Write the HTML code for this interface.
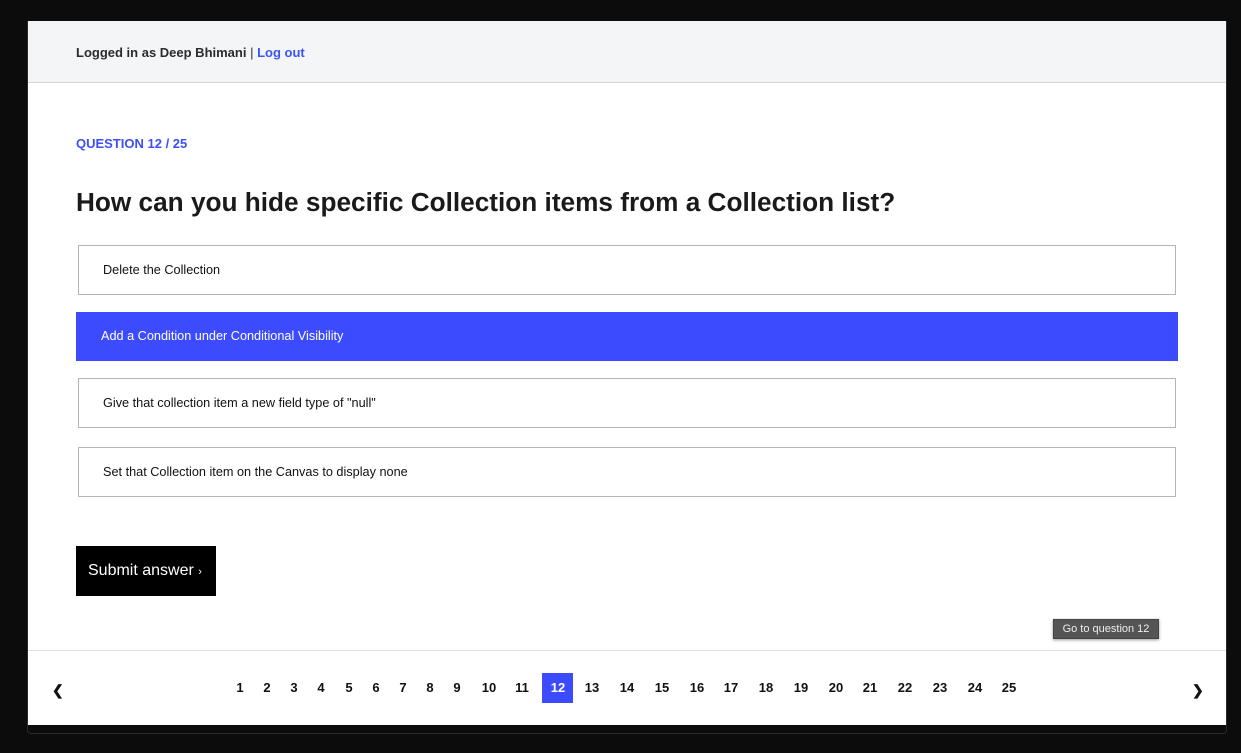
<!DOCTYPE html>
<html><head><meta charset="utf-8"><style>
*{margin:0;padding:0;box-sizing:border-box}
body{width:1241px;height:753px;background:#0c0c0c;font-family:"Liberation Sans",Arial,sans-serif;position:relative;overflow:hidden}
.panel{position:absolute;left:28px;top:21px;width:1198px;height:704px;background:#fff;overflow:hidden}
.outline{position:absolute;left:27px;top:21px;width:1200px;height:713px;border:1px solid #2a2a2a;border-top:none;border-radius:0 0 4px 4px}
.hdr{position:absolute;left:0;top:0;width:100%;height:62px;background:#f4f5f7;border-bottom:1px solid #d6d6d6}
.hdr .t{position:absolute;left:48px;top:24px;font-size:13px;font-weight:bold;color:#2b2b2b}
.hdr a{color:#3a55f5;text-decoration:none}
.q{position:absolute;left:48px;top:115px;font-size:13px;font-weight:bold;color:#3d4ef8}
h1{position:absolute;left:48px;top:166px;font-size:26.2px;font-weight:bold;color:#1a1a1a}
.opt{position:absolute;left:50px;width:1098px;height:50px;border:1px solid #b5b5b5;font-size:12.7px;color:#111;padding-left:24px;line-height:48px}
.sel{left:48px;width:1102px;height:49px;background:#3c4bfe;color:#fff;border:none;padding-left:25px;line-height:49px}
.btn{position:absolute;left:48px;top:525px;width:140px;height:50px;background:#000;color:#fff;font-size:16px;line-height:50px;padding-left:12px}
.tip{position:absolute;left:1025px;top:598px;width:106px;height:20px;background:#555;border:1px solid #444;color:#eee;font-size:11px;line-height:18px;text-align:center;box-shadow:0 1px 3px rgba(0,0,0,.4)}
.ft{position:absolute;left:0;top:629px;width:100%;border-top:1px solid #dbe2e6}
.n{position:absolute;top:659px;font-size:13px;font-weight:bold;color:#111;transform:translateX(-50%)}
.cur{position:absolute;left:514px;top:652px;width:31px;height:30px;background:#3c4bfe}
.arr{position:absolute;top:661px;font-size:14px;font-weight:bold;color:#111}
</style></head><body>
<div class="outline"></div>
<div class="panel">
<div class="hdr"><div class="t">Logged in as Deep Bhimani <span style="font-weight:normal;color:#333">|</span> <a>Log out</a></div></div>
<div class="q">QUESTION 12 / 25</div>
<h1>How can you hide specific Collection items from a Collection list?</h1>
<div class="opt" style="top:224px">Delete the Collection</div>
<div class="opt sel" style="top:291px">Add a Condition under Conditional Visibility</div>
<div class="opt" style="top:357px">Give that collection item a new field type of "null"</div>
<div class="opt" style="top:426px">Set that Collection item on the Canvas to display none</div>
<div class="btn">Submit answer <span style="font-size:11px">›</span></div>
<div class="tip">Go to question 12</div>
<div class="ft"></div>
<div class="arr" style="left:24px">❮</div>
<div class="arr" style="left:1164px">❯</div>
<div class="cur"></div>
<div class="n" style="left:212px">1</div><div class="n" style="left:239px">2</div><div class="n" style="left:266px">3</div><div class="n" style="left:293px">4</div><div class="n" style="left:321px">5</div><div class="n" style="left:348px">6</div><div class="n" style="left:375px">7</div><div class="n" style="left:402px">8</div><div class="n" style="left:429px">9</div><div class="n" style="left:461px">10</div><div class="n" style="left:494px">11</div><div class="n" style="left:530px;color:#fff">12</div><div class="n" style="left:564px">13</div><div class="n" style="left:599px">14</div><div class="n" style="left:634px">15</div><div class="n" style="left:669px">16</div><div class="n" style="left:703px">17</div><div class="n" style="left:738px">18</div><div class="n" style="left:773px">19</div><div class="n" style="left:808px">20</div><div class="n" style="left:842px">21</div><div class="n" style="left:877px">22</div><div class="n" style="left:912px">23</div><div class="n" style="left:947px">24</div><div class="n" style="left:981px">25</div>
</div>
</body></html>
